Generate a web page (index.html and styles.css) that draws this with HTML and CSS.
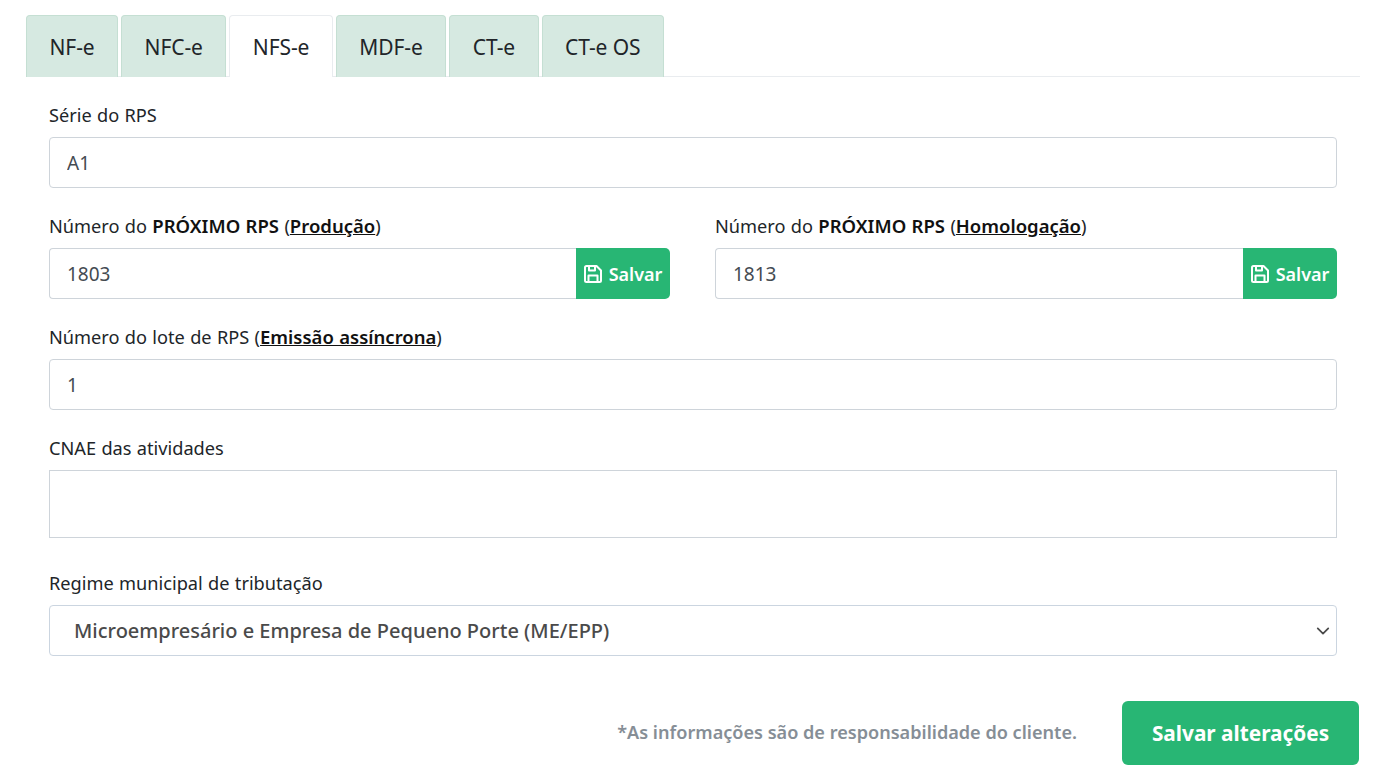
FILE: index.html
```html
<!DOCTYPE html>
<html lang="pt-BR">
<head>
<meta charset="utf-8">
<title>NFS-e</title>
<link rel="stylesheet" href="styles.css">
</head>
<body>
<div class="page">
  <nav class="tabs">
    <a class="tab">NF-e</a>
    <a class="tab">NFC-e</a>
    <a class="tab active">NFS-e</a>
    <a class="tab">MDF-e</a>
    <a class="tab">CT-e</a>
    <a class="tab">CT-e OS</a>
  </nav>
  <form class="panel">
    <div class="field">
      <label class="label">Série do RPS</label>
      <input class="input" value="A1">
    </div>
    <div class="row">
      <div class="field">
        <label class="label">Número do <b>PRÓXIMO RPS</b> (<b class="u">Produção</b>)</label>
        <div class="group">
          <input class="input joined" value="1803">
          <button type="button" class="save">
            <svg class="icon" viewBox="0 0 18 18"><g fill="none" stroke="currentColor" stroke-width="2" stroke-linejoin="round"><path d="M2.500 1h10L17 5.500v10a1.500 1.500 0 0 1-1.500 1.500h-13A1.500 1.500 0 0 1 1 15.500v-13A1.500 1.500 0 0 1 2.500 1z"/><path d="M5 1.500v4h6v-4"/><path d="M4.500 16.500v-6h9v6"/></g></svg>
            Salvar
          </button>
        </div>
      </div>
      <div class="field">
        <label class="label">Número do <b>PRÓXIMO RPS</b> (<b class="u">Homologação</b>)</label>
        <div class="group">
          <input class="input joined" value="1813">
          <button type="button" class="save">
            <svg class="icon" viewBox="0 0 18 18"><g fill="none" stroke="currentColor" stroke-width="2" stroke-linejoin="round"><path d="M2.500 1h10L17 5.500v10a1.500 1.500 0 0 1-1.500 1.500h-13A1.500 1.500 0 0 1 1 15.500v-13A1.500 1.500 0 0 1 2.500 1z"/><path d="M5 1.500v4h6v-4"/><path d="M4.500 16.500v-6h9v6"/></g></svg>
            Salvar
          </button>
        </div>
      </div>
    </div>
    <div class="field">
      <label class="label">Número do lote de RPS (<b class="u">Emissão assíncrona</b>)</label>
      <input class="input" value="1">
    </div>
    <div class="field">
      <label class="label">CNAE das atividades</label>
      <div class="cnae"></div>
    </div>
    <div class="field">
      <label class="label">Regime municipal de tributação</label>
      <div class="select">
        <span>Microempresário e Empresa de Pequeno Porte (ME/EPP)</span>
        <svg class="chev" viewBox="0 0 16 16"><path fill="none" stroke="#4a4a4a" stroke-width="2" stroke-linecap="round" stroke-linejoin="round" d="M2 5l6 6 6-6"/></svg>
      </div>
    </div>
  </form>
  <footer class="foot">
    <span class="note">*As informações são de responsabilidade do cliente.</span>
    <button type="button" class="primary">Salvar alterações</button>
  </footer>
</div>
</body>
</html>
```
FILE: styles.css
```css
* { box-sizing: border-box; }
html, body { margin: 0; background: #fff; }
body { font-family: "Noto Sans", "Open Sans", sans-serif; color: #212529; overflow: hidden; }
.page { width: 1396px; height: 775px; padding: 15px 36px 0 26px; }
.tabs { display: flex; gap: 3px; height: 62px; border-bottom: 1px solid #e9ecef; }
.tab { height: 62px; padding: 0 22.500px; display: flex; align-items: center; font-size: 21px; letter-spacing: -0.1px; color: #212529; background: #d6e9e1; border: 1px solid #c5dfd3; border-bottom: 0; border-radius: 4px 4px 0 0; }
.tab.active { background: #fff; border-color: #e9ecef; }
.panel { padding: 0 23px; display: flex; flex-direction: column; }
.field { display: flex; flex-direction: column; flex: 1; min-width: 0; }
.label { height: 60px; padding-top: 26px; font-size: 18.200px; word-spacing: 0.6px; line-height: 24px; color: #212529; }
.label b { font-size: 18.500px; font-weight: 600; color: #111; }
.u { text-decoration: underline; }
.input { width: 100%; height: 51px; padding: 0 17px; font: 19px "Noto Sans", sans-serif; color: #444b52; background: #fff; border: 1px solid #ced4da; border-radius: 4px; outline: none; }
.row { display: grid; grid-template-columns: 621px 622px; gap: 45px; }
.group { display: flex; }
.joined { flex: 1; min-width: 0; border-radius: 4px 0 0 4px; border-right: 0; }
.save { width: 94px; height: 51px; display: flex; align-items: center; justify-content: center; gap: 7px; background: #28b674; color: #fff; border: 0; border-radius: 0 5px 5px 0; font: 600 18px "Noto Sans", sans-serif; padding: 0; }
.icon { width: 18px; height: 18px; }
.cnae { height: 68px; border: 1px solid #ced4da; }
.field:has(.cnae) { margin-bottom: 7px; }
.select { height: 51px; padding: 0 6px 0 24px; display: flex; align-items: center; justify-content: space-between; border: 1px solid #cbd5e0; border-radius: 4px; font-size: 20px; font-weight: 500; color: #4a4a4a; }
.chev { width: 14px; height: 14px; }
.foot { display: flex; justify-content: flex-end; align-items: center; gap: 45px; margin: 45px 1px 0 0; }
.note { font-size: 18.100px; font-weight: 600; color: #868e96; margin-bottom: 2px; }
.primary { width: 237px; height: 64px; background: #28b674; color: #fff; border: 0; border-radius: 6px; font: 700 20.800px "Noto Sans", sans-serif; padding: 0; }
```
